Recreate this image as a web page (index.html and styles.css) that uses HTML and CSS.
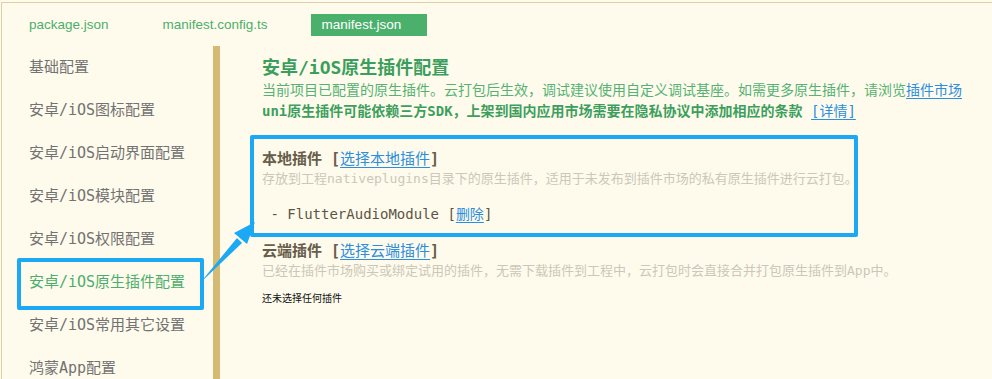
FILE: index.html
```html
<!DOCTYPE html>
<html lang="zh-CN">
<head>
  <meta charset="UTF-8" />
  <title>manifest.json</title>
  <link rel="stylesheet" href="styles.css">
</head>
<body>
  <div class="frame">
    <div class="tabs">
      <span class="tab">package.json</span>
      <span class="tab">manifest.config.ts</span>
      <span class="tab active">manifest.json</span>
    </div>

    <div class="main">
      <ul class="sidebar">
        <li>基础配置</li>
        <li>安卓/iOS图标配置</li>
        <li>安卓/iOS启动界面配置</li>
        <li>安卓/iOS模块配置</li>
        <li>安卓/iOS权限配置</li>
        <li class="selected">安卓/iOS原生插件配置</li>
        <li>安卓/iOS常用其它设置</li>
        <li>鸿蒙App配置</li>
      </ul>
      <div class="divider"></div>

      <section class="content">
        <h1>安卓/iOS原生插件配置</h1>
        <p class="desc">当前项目已配置的原生插件。云打包后生效，调试建议使用自定义调试基座。如需更多原生插件，请浏览<a href="#">插件市场</a></p>
        <p class="desc strong">uni原生插件可能依赖三方SDK，上架到国内应用市场需要在隐私协议中添加相应的条款 <a href="#">[详情]</a></p>

        <div class="plugin-group highlight">
          <div class="group-title">本地插件 [<a href="#">选择本地插件</a>]</div>
          <div class="hint">存放到工程nativeplugins目录下的原生插件，适用于未发布到插件市场的私有原生插件进行云打包。</div>
          <div class="plugin-item">&nbsp;- FlutterAudioModule [<a href="#">删除</a>]</div>
        </div>

        <div class="plugin-group">
          <div class="group-title">云端插件 [<a href="#">选择云端插件</a>]</div>
          <div class="hint">已经在插件市场购买或绑定试用的插件，无需下载插件到工程中，云打包时会直接合并打包原生插件到App中。</div>
          <div class="empty">还未选择任何插件</div>
        </div>
      </section>
    </div>

    <!-- 标注箭头 -->
    <svg class="arrow" width="992" height="379" viewBox="0 0 992 379">
      <polygon points="199,283 236,238 241,243" fill="#1ba8f5" />
      <polygon points="254,222 233,233 246,244" fill="#1ba8f5" />
    </svg>
  </div>
</body>
</html>
```

FILE: styles.css
```css
:root {
  --bg: #fefbec;
  --line: #ddd0a4;
  --bar: #d4ba72;
  --green: #4cae6d;
  --green-dark: #3a9e5d;
  --blue: #2b8ee0;
  --mark: #1ba8f5;
  --mono: "DejaVu Sans Mono", "Noto Sans CJK SC", monospace;
}

* {
  margin: 0;
  padding: 0;
  box-sizing: border-box;
}

body {
  background: var(--bg);
  font-family: var(--mono);
  height: 379px;
  overflow: hidden;
}

.frame {
  position: relative;
  margin: 2px 0 0 1px;
  border-top: 1px solid var(--line);
  border-left: 1px solid var(--line);
  height: 377px;
}

.tabs {
  height: 43px;
  display: flex;
  align-items: center;
  gap: 32px;
  padding-left: 16px;
  font-family: "Liberation Sans", Arial, sans-serif;
  font-size: 13.5px;
}

.tab {
  color: var(--green);
  padding: 0 11px;
  line-height: 22px;
  margin-top: 1px;
}

.tab.active {
  background: #4cb06d;
  color: #fff;
  width: 116px;
}

.main {
  display: flex;
  height: 334px;
}

.sidebar {
  list-style: none;
  width: 211px;
  flex-shrink: 0;
}

.sidebar li {
  position: relative;
  height: 43px;
  line-height: 43px;
  padding-left: 27px;
  font-size: 15px;
  color: #727272;
}

.sidebar li.selected {
  color: var(--green);
}

.sidebar li.selected::after {
  content: "";
  position: absolute;
  left: 15px;
  top: -3px;
  width: 179px;
  height: 44px;
  border: 4px solid var(--mark);
  border-radius: 2px;
}

.divider {
  width: 7px;
  flex-shrink: 0;
  background: var(--bar);
}

.content {
  padding: 10px 0 0 42px;
}

.content h1 {
  font-size: 18px;
  line-height: 24px;
  font-weight: bold;
  color: var(--green-dark);
}

.desc {
  font-size: 14px;
  line-height: 21px;
  color: #55b274;
  white-space: nowrap;
}

.desc.strong {
  font-weight: bold;
  color: #3c9f5e;
}

.desc a,
.group-title a,
.plugin-item a {
  color: var(--blue);
  text-decoration: underline;
  text-underline-offset: 3px;
  font-weight: normal;
}

.plugin-group.highlight {
  margin: 13px 0 0 -12px;
  width: 608px;
  border: 4px solid var(--mark);
  border-radius: 2px;
  padding: 10px 0 9px 8px;
}

.plugin-group {
  margin-top: 4px;
}

.group-title {
  font-size: 15px;
  line-height: 20px;
  font-weight: bold;
  color: #675d4b;
}

.hint {
  font-size: 13px;
  line-height: 20px;
  color: #ccc7b8;
  white-space: nowrap;
}

.plugin-item {
  margin-top: 15px;
  font-size: 14px;
  line-height: 20px;
  color: #5c5546;
}

.empty {
  margin-top: 11px;
  font-size: 10px;
  line-height: 14px;
  color: #111;
}

.arrow {
  position: absolute;
  left: -1px;
  top: -3px;
  pointer-events: none;
}
```
